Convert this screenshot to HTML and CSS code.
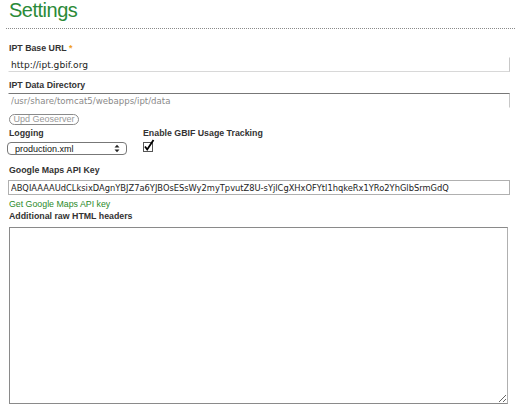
FILE: index.html
```html
<!DOCTYPE html>
<html>
<head>
<meta charset="utf-8">
<link rel="stylesheet" href="styles.css">
</head>
<body>
<h1 class="title">Settings</h1>
<form class="settings">
  <label class="lbl lbl-first">IPT Base URL <span class="req">*</span></label>
  <input class="txt txt-base" type="text" value="http://ipt.gbif.org">

  <label class="lbl lbl-dir">IPT Data Directory</label>
  <input class="txt txt-dir" type="text" value="/usr/share/tomcat5/webapps/ipt/data" readonly>

  <button class="btn" type="button">Upd Geoserver</button>

  <div class="row">
    <div class="col col-log">
      <label class="lbl">Logging</label>
      <div class="sel-wrap">
        <select class="sel"><option>production.xml</option></select>
        <svg class="sel-arrow" width="6" height="9" viewBox="0 0 6 9"><path d="M0.5 3.5 L3 0.8 L5.5 3.5 Z M0.5 5.5 L3 8.2 L5.5 5.5 Z" fill="#222"/></svg>
      </div>
    </div>
    <div class="col col-track">
      <label class="lbl">Enable GBIF Usage Tracking</label>
      <svg class="chk" width="12" height="13" viewBox="0 0 12 13">
        <rect x="0.5" y="3.5" width="9" height="9" fill="#fff" stroke="#555"/>
        <path d="M2 7.5 L4.2 10.5 L10.5 1" fill="none" stroke="#000" stroke-width="1.8"/>
      </svg>
    </div>
  </div>

  <label class="lbl lbl-api">Google Maps API Key</label>
  <input class="txt txt-api" type="text" value="ABQIAAAAUdCLksixDAgnYBJZ7a6YJBOsESsWy2myTpvutZ8U-sYjlCgXHxOFYtl1hqkeRx1YRo2YhGlbSrmGdQ">

  <a class="link" href="#">Get Google Maps API key</a>
  <label class="lbl lbl-extra">Additional raw HTML headers</label>
  <textarea class="area"></textarea>
</form>
</body>
</html>
```

FILE: styles.css
```css
html, body {
  margin: 0;
  background: #fff;
}
body {
  padding: 0 5px 0 6px;
  font-family: "Liberation Sans", Arial, sans-serif;
}
.title {
  margin: 0;
  padding: 0 0 8px 3px;
  font: 20px/20px "Liberation Sans", Arial, sans-serif;
  letter-spacing: -0.5px;
  color: #2b8a38;
  border-bottom: 1px dotted #8a8a8a;
}
.settings {
  display: flex;
  flex-direction: column;
  align-items: flex-start;
}
.lbl {
  display: block;
  padding-left: 3px;
  font: bold 8.8px/11px "Liberation Sans", Arial, sans-serif;
  color: #333;
}
.req {
  color: #f0a020;
}
.lbl-first { margin-top: 14px; }
.txt {
  box-sizing: border-box;
  width: 502px;
  height: 15px;
  margin: 3px 0 0 2px;
  padding: 0 0 0 2px;
  font: 8.6px "DejaVu Sans", sans-serif;
  color: #222;
  border: 1px solid;
  outline: none;
  background: #fff;
}
.txt-base {
  font-size: 9.1px;
  border-color: #fff #c8c8c8 #d8d8d8 #fff;
}
.lbl-dir { margin-top: 8px; }
.txt-dir {
  margin-top: 2px;
  color: #8a8a8a;
  border-color: #777 #c8c8c8 #fff #fff;
}
.btn {
  box-sizing: border-box;
  margin: 6px 0 0 3px;
  height: 11px;
  width: 70px;
  padding: 0;
  font: 9px/9px "Liberation Sans", Arial, sans-serif;
  color: #999;
  background: #fff;
  border: 1px solid #8a8a8a;
  border-radius: 6px;
}
.row {
  display: flex;
  margin-top: 3px;
}
.col-log {
  width: 137px;
}
.sel-wrap {
  position: relative;
  margin: 3px 0 0 1px;
  width: 120px;
  height: 13px;
}
.sel {
  box-sizing: border-box;
  appearance: none;
  -webkit-appearance: none;
  display: block;
  width: 120px;
  height: 13px;
  margin: 0;
  padding: 0 0 0 7px;
  font: 9px "Liberation Sans", Arial, sans-serif;
  color: #111;
  background: #fff;
  border: 1px solid #777;
  border-radius: 4px;
}
.sel-arrow {
  position: absolute;
  right: 7px;
  top: 2px;
}
.col-track .lbl {
  padding-left: 0;
}
.chk {
  display: block;
  margin-top: 0;
}
.lbl-api { margin-top: 10px; }
.txt-api {
  margin-top: 4px;
  font-size: 8.3px;
  border-color: #b0b0b0;
}
.link {
  margin: 4px 0 0 3px;
  font: 8.8px/11px "Liberation Sans", Arial, sans-serif;
  color: #2b8a2b;
  text-decoration: none;
}
.lbl-extra { margin-top: 1px; }
.area {
  box-sizing: border-box;
  margin: 5px 0 0 3px;
  width: 499px;
  height: 177px;
  border: 1px solid #8a8a8a;
  border-right-color: #b0b0b0;
  padding: 0;
  font: 9px "DejaVu Sans", sans-serif;
}
```
